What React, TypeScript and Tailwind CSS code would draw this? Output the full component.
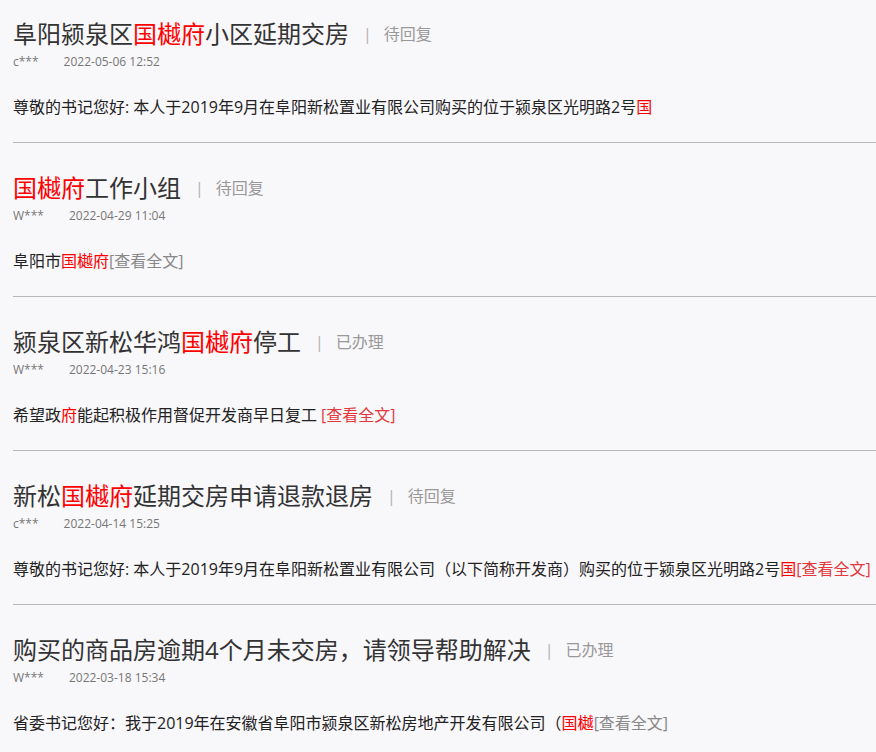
import React from 'react';

type Part = { t: string; red?: boolean };

type Item = {
  title: Part[];
  status: string;
  user: string;
  date: string;
  body: Part[];
  more?: 'gray' | 'red';
  moreGap?: boolean;
};

const items: Item[] = [
  {
    title: [{ t: '阜阳颍泉区' }, { t: '国樾府', red: true }, { t: '小区延期交房' }],
    status: '待回复',
    user: 'c***',
    date: '2022-05-06 12:52',
    body: [{ t: '尊敬的书记您好: 本人于2019年9月在阜阳新松置业有限公司购买的位于颍泉区光明路2号' }, { t: '国', red: true }],
  },
  {
    title: [{ t: '国樾府', red: true }, { t: '工作小组' }],
    status: '待回复',
    user: 'W***',
    date: '2022-04-29 11:04',
    body: [{ t: '阜阳市' }, { t: '国樾府', red: true }],
    more: 'gray',
  },
  {
    title: [{ t: '颍泉区新松华鸿' }, { t: '国樾府', red: true }, { t: '停工' }],
    status: '已办理',
    user: 'W***',
    date: '2022-04-23 15:16',
    body: [{ t: '希望政' }, { t: '府', red: true }, { t: '能起积极作用督促开发商早日复工' }],
    more: 'red',
    moreGap: true,
  },
  {
    title: [{ t: '新松' }, { t: '国樾府', red: true }, { t: '延期交房申请退款退房' }],
    status: '待回复',
    user: 'c***',
    date: '2022-04-14 15:25',
    body: [
      { t: '尊敬的书记您好: 本人于2019年9月在阜阳新松置业有限公司（以下简称开发商）购买的位于颍泉区光明路2号' },
      { t: '国', red: true },
    ],
    more: 'red',
  },
  {
    title: [{ t: '购买的商品房逾期4个月未交房，请领导帮助解决' }],
    status: '已办理',
    user: 'W***',
    date: '2022-03-18 15:34',
    body: [{ t: '省委书记您好：我于2019年在安徽省阜阳市颍泉区新松房地产开发有限公司（' }, { t: '国樾', red: true }],
    more: 'gray',
  },
];

const Row = ({ item, first }: { item: Item; first: boolean }) => (
  <div className={`ml-[13px] border-b border-[#b8b8bb] pb-[24px] ${first ? 'pt-[18px]' : 'pt-[29px]'}`}>
    <div className="flex items-center h-[32px] whitespace-nowrap">
      <span className="text-[24px] leading-[32px] text-[#333]">
        {item.title.map((p, i) => (
          <span key={i} className={p.red ? 'text-[#ff0000]' : ''}>
            {p.t}
          </span>
        ))}
      </span>
      <span className="ml-[14px] text-[16px] text-[#b0b0b0]">|</span>
      <span className="ml-[12px] text-[16px] text-[#999]">{item.status}</span>
    </div>
    <div className="mt-[4px] flex h-[16px] items-center text-[12px] text-[#777]">
      <span>{item.user}</span>
      <span className="ml-[25px]">{item.date}</span>
    </div>
    <div className="mt-[26px] h-[22px] overflow-hidden whitespace-nowrap text-[16px] leading-[22px] text-[#222]">
      {item.body.map((p, i) => (
        <span key={i} className={p.red ? 'text-[#ff0000]' : ''}>
          {p.t}
        </span>
      ))}
      {item.more && (
        <span className={`${item.moreGap ? 'ml-[4px]' : ''} ${item.more === 'red' ? 'text-[#e4393c]' : 'text-[#888]'}`}>
          [查看全文]
        </span>
      )}
    </div>
  </div>
);

export default function App() {
  return (
    <div
      className="min-h-screen w-[876px] h-[752px] overflow-hidden bg-[#f8f7fa]"
      style={{ fontFamily: '"Open Sans", "Noto Sans CJK SC", sans-serif' }}
    >
      {items.map((item, i) => (
        <Row key={i} item={item} first={i === 0} />
      ))}
    </div>
  );
}
